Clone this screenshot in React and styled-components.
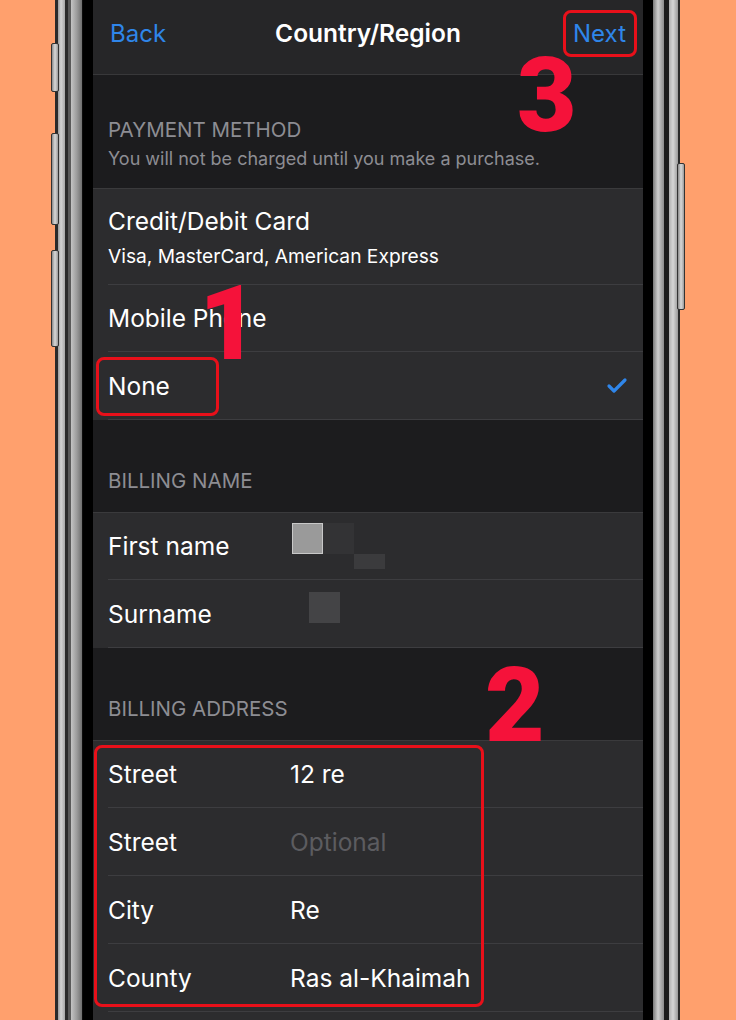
import React from "react";
import styled, { createGlobalStyle } from "styled-components";
import { Check } from "lucide-react";

const GlobalStyle = createGlobalStyle`
  html, body {
    margin: 0;
    padding: 0;
    background: #ffa06d;
  }
  body {
    font-family: "Inter", "Noto Sans", sans-serif;
    -webkit-font-smoothing: antialiased;
  }
`;

const Page = styled.div`
  width: 736px;
  height: 1020px;
  overflow: hidden;
  display: flex;
  background: #ffa06d;
`;

const LeftBezel = styled.div`
  position: relative;
  width: 38px;
  margin-left: 55px;
  flex-shrink: 0;
  background: linear-gradient(
    to right,
    #2a2a2a 0px,
    #2a2a2a 3px,
    #9c9c9c 3px,
    #d4d4d4 6px,
    #a8a8a8 10px,
    #2b2b2b 10px,
    #2b2b2b 13px,
    #5a5a5a 13px,
    #5a5a5a 16px,
    #c4c4c4 16px,
    #9a9a9a 22px,
    #6e6e6e 27px,
    #1a1a1a 27px,
    #000 28px,
    #000 38px
  );
`;

const RightBezel = styled.div`
  position: relative;
  width: 37px;
  flex-shrink: 0;
  background: linear-gradient(
    to right,
    #000 0px,
    #000 10px,
    #7a7a7a 10px,
    #cfcfcf 15px,
    #8c8c8c 21px,
    #1c1c1c 21px,
    #1c1c1c 26px,
    #b0b0b0 26px,
    #d6d6d6 30px,
    #9a9a9a 35px,
    #2a2a2a 35px,
    #2a2a2a 37px
  );
`;

const SideButton = styled.div`
  position: absolute;
  top: ${(p) => p.$top}px;
  height: ${(p) => p.$height}px;
  width: 6px;
  ${(p) => (p.$right ? "right: -5px;" : "left: -4px;")}
  border-radius: 2px;
  border: 1px solid #333;
  background: linear-gradient(to right, #8a8a8a, #d8d8d8, #9a9a9a);
`;

const Screen = styled.div`
  position: relative;
  width: 550px;
  flex-shrink: 0;
  display: flex;
  flex-direction: column;
  background: #1c1c1e;
`;

const NavBar = styled.div`
  height: 75px;
  flex-shrink: 0;
  display: flex;
  align-items: center;
  justify-content: space-between;
  padding: 0 17px 8px;
  box-sizing: border-box;
  background: #262628;
  border-bottom: 1px solid #38383a;
`;

const NavButton = styled.span`
  font-size: 24px;
  color: #2f86ea;
  width: 80px;
  text-align: ${(p) => (p.$end ? "right" : "left")};
`;

const NavTitle = styled.span`
  font-size: 24.5px;
  font-weight: 600;
  color: #fff;
`;

const SectionHeader = styled.div`
  flex-shrink: 0;
  height: ${(p) => p.$height}px;
  box-sizing: border-box;
  padding: ${(p) => p.$top}px 15px 0;
  display: flex;
  flex-direction: column;
  gap: 5px;
`;

const HeaderTitle = styled.div`
  font-size: 20.5px;
  line-height: 24px;
  color: #8d8d93;
  text-transform: uppercase;
`;

const HeaderNote = styled.div`
  font-size: 18px;
  line-height: 24px;
  color: #8d8d93;
`;

const Group = styled.div`
  flex-shrink: 0;
  background: #2c2c2e;
  border-top: 1px solid #3a3a3c;
`;

const Row = styled.div`
  height: ${(p) => p.$height || 68}px;
  box-sizing: border-box;
  margin-left: 15px;
  padding-right: 14px;
  display: flex;
  align-items: center;
  border-bottom: 1px solid #3d3d40;
`;

const RowStack = styled.div`
  flex: 1;
  display: flex;
  flex-direction: column;
  gap: 8px;
`;

const Label = styled.div`
  font-size: 24.5px;
  color: #fff;
  flex: ${(p) => (p.$fixed ? "0 0 182px" : "1")};
`;

const SubLabel = styled.div`
  font-size: 19.2px;
  color: #fff;
`;

const Value = styled.div`
  font-size: 24.5px;
  color: ${(p) => (p.$placeholder ? "#5c5c60" : "#fff")};
`;

const Mosaic = styled.div`
  display: grid;
  grid-template-columns: 31px 31px 31px;
  grid-template-rows: 31px 15px;
  margin-left: 2px;
`;

const Tile = styled.div`
  grid-column: ${(p) => p.$col};
  grid-row: ${(p) => p.$row};
  background: ${(p) => p.$color};
  border: ${(p) => (p.$edge ? "1px solid #c8c8c8" : "none")};
`;

const Blur = styled.div`
  width: 31px;
  height: 31px;
  margin-left: 19px;
  margin-bottom: 12px;
  background: #444446;
`;

const Outline = styled.div`
  position: absolute;
  left: ${(p) => p.$left}px;
  top: ${(p) => p.$top}px;
  width: ${(p) => p.$width}px;
  height: ${(p) => p.$height}px;
  box-sizing: border-box;
  border: 3px solid #e8101a;
  border-radius: 8px;
  pointer-events: none;
`;

const Marker = styled.div`
  position: absolute;
  left: ${(p) => p.$left}px;
  top: ${(p) => p.$top}px;
  font-family: "Roboto", "DejaVu Sans", sans-serif;
  font-weight: 900;
  font-size: 103px;
  line-height: 1;
  color: #f5123a;
`;

const App = () => {
  return (
    <>
      <GlobalStyle />
      <Page>
        <LeftBezel>
          <SideButton $top={43} $height={47} />
          <SideButton $top={133} $height={90} />
          <SideButton $top={250} $height={95} />
        </LeftBezel>

        <Screen>
          <NavBar>
            <NavButton>Back</NavButton>
            <NavTitle>Country/Region</NavTitle>
            <NavButton $end>Next</NavButton>
          </NavBar>

          <SectionHeader $height={113} $top={43}>
            <HeaderTitle>Payment Method</HeaderTitle>
            <HeaderNote>You will not be charged until you make a purchase.</HeaderNote>
          </SectionHeader>
          <Group>
            <Row $height={96}>
              <RowStack>
                <Label>Credit/Debit Card</Label>
                <SubLabel>Visa, MasterCard, American Express</SubLabel>
              </RowStack>
            </Row>
            <Row $height={67}>
              <Label>Mobile Phone</Label>
            </Row>
            <Row $height={68}>
              <Label>None</Label>
              <Check size={24} strokeWidth={3.2} color="#2f86ea" />
            </Row>
          </Group>

          <SectionHeader $height={92} $top={49}>
            <HeaderTitle>Billing Name</HeaderTitle>
          </SectionHeader>
          <Group>
            <Row $height={67}>
              <Label $fixed>First name</Label>
              <Mosaic>
                <Tile $col={1} $row={1} $color="#9a9a9a" $edge />
                <Tile $col={2} $row={1} $color="#333335" />
                <Tile $col={3} $row={2} $color="#3b3b3d" />
              </Mosaic>
            </Row>
            <Row $height={68}>
              <Label $fixed>Surname</Label>
              <Blur />
            </Row>
          </Group>

          <SectionHeader $height={92} $top={49}>
            <HeaderTitle>Billing Address</HeaderTitle>
          </SectionHeader>
          <Group>
            <Row $height={67}>
              <Label $fixed>Street</Label>
              <Value>12 re</Value>
            </Row>
            <Row $height={68}>
              <Label $fixed>Street</Label>
              <Value $placeholder>Optional</Value>
            </Row>
            <Row $height={68}>
              <Label $fixed>City</Label>
              <Value>Re</Value>
            </Row>
            <Row $height={68}>
              <Label $fixed>County</Label>
              <Value>Ras al-Khaimah</Value>
            </Row>
            <Row $height={68} />
          </Group>

          <Outline $left={470} $top={10} $width={74} $height={47} />
          <Outline $left={3} $top={357} $width={123} $height={59} />
          <Outline $left={1} $top={745} $width={390} $height={262} />
          <Marker $left={424} $top={44}>3</Marker>
          <Marker $left={106} $top={272}>1</Marker>
          <Marker $left={392} $top={654}>2</Marker>
        </Screen>

        <RightBezel>
          <SideButton $right $top={163} $height={145} />
        </RightBezel>
      </Page>
    </>
  );
};

export default App;
